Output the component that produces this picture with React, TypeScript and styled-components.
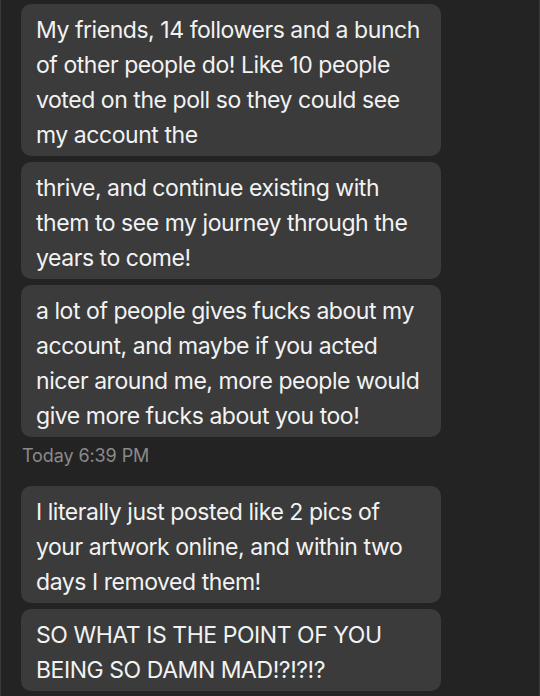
import React from 'react';
import styled, { createGlobalStyle } from 'styled-components';

const GlobalStyle = createGlobalStyle`
  html, body {
    margin: 0;
    padding: 0;
    background: #232323;
  }
  * {
    box-sizing: border-box;
  }
`;

const Screen = styled.div`
  width: 540px;
  height: 696px;
  overflow: hidden;
  background: #232323;
  border-left: 1px solid #3a3a3a;
  border-right: 1px solid #3a3a3a;
  padding: 4px 0 0 20px;
  font-family: Inter, "Noto Sans", sans-serif;
`;

const Thread = styled.div`
  display: flex;
  flex-direction: column;
  gap: 6px;
`;

const Bubble = styled.div`
  width: 420px;
  background: #3b3b3b;
  border-radius: 10px;
  padding: 9px 10px 3px 15px;
  color: #f2f2f2;
  font-size: 23px;
  line-height: 35px;
  letter-spacing: -0.45px;
`;

const Line = styled.div`
  white-space: nowrap;
`;

const Timestamp = styled.div`
  color: #8a8a8a;
  font-size: 18px;
  line-height: 24px;
  letter-spacing: -0.1px;
  margin: 1px 0 12px 1px;
`;

type Item =
  | { kind: 'msg'; lines: string[] }
  | { kind: 'time'; text: string };

const items: Item[] = [
  {
    kind: 'msg',
    lines: [
      'My friends, 14 followers and a bunch',
      'of other people do! Like 10 people',
      'voted on the poll so they could see',
      'my account the',
    ],
  },
  {
    kind: 'msg',
    lines: [
      'thrive, and continue existing with',
      'them to see my journey through the',
      'years to come!',
    ],
  },
  {
    kind: 'msg',
    lines: [
      'a lot of people gives fucks about my',
      'account, and maybe if you acted',
      'nicer around me, more people would',
      'give more fucks about you too!',
    ],
  },
  { kind: 'time', text: 'Today 6:39 PM' },
  {
    kind: 'msg',
    lines: [
      'I literally just posted like 2 pics of',
      'your artwork online, and within two',
      'days I removed them!',
    ],
  },
  {
    kind: 'msg',
    lines: ['SO WHAT IS THE POINT OF YOU', 'BEING SO DAMN MAD!?!?!?'],
  },
];

const App: React.FC = () => {
  return (
    <>
      <GlobalStyle />
      <Screen>
        <Thread>
          {items.map((item, i) =>
            item.kind === 'time' ? (
              <Timestamp key={i}>{item.text}</Timestamp>
            ) : (
              <Bubble key={i}>
                {item.lines.map((l, j) => (
                  <Line key={j}>{l}</Line>
                ))}
              </Bubble>
            )
          )}
        </Thread>
      </Screen>
    </>
  );
};

export default App;
